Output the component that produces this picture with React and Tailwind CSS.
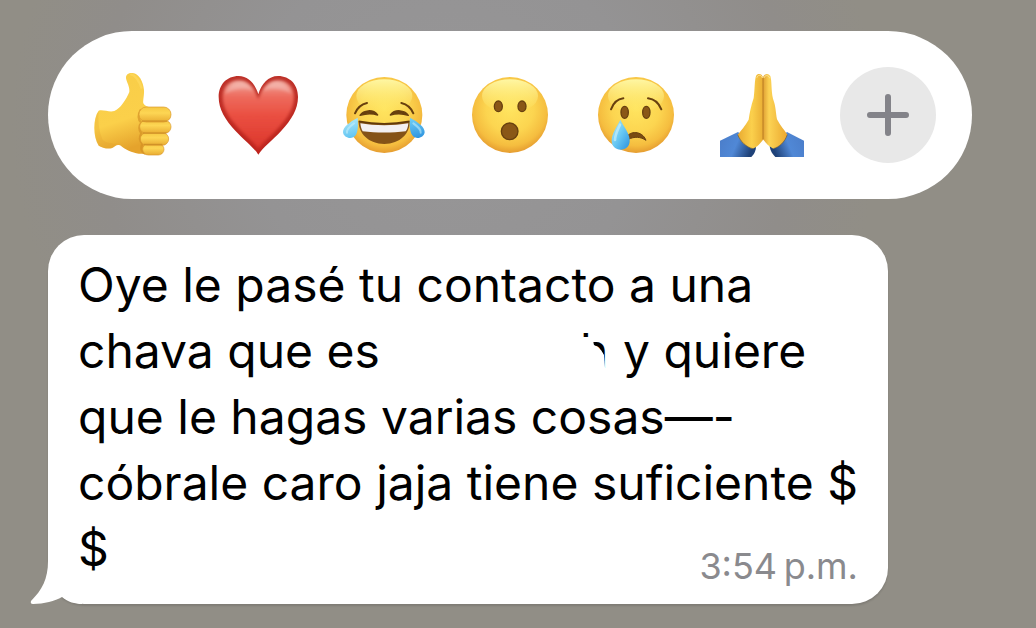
import React from "react";

function FaceGradient({ id }) {
  return (
    <defs>
      <radialGradient id={id} cx="0.5" cy="0.42" r="0.62">
        <stop offset="0" stopColor="#ffe45f" />
        <stop offset="0.5" stopColor="#fcd550" />
        <stop offset="0.78" stopColor="#f5bd3f" />
        <stop offset="1" stopColor="#df8f2a" />
      </radialGradient>
      <linearGradient id={id + "-shine"} x1="0" y1="0" x2="0" y2="1">
        <stop offset="0" stopColor="#fff9a8" stopOpacity="0.95" />
        <stop offset="1" stopColor="#fff27a" stopOpacity="0" />
      </linearGradient>
      <linearGradient id={id + "-tear"} x1="0" y1="0" x2="1" y2="1">
        <stop offset="0" stopColor="#b4ebfa" />
        <stop offset="0.5" stopColor="#68c8f3" />
        <stop offset="1" stopColor="#2a90de" />
      </linearGradient>
    </defs>
  );
}

function Face({ id, cx }) {
  return (
    <>
      <FaceGradient id={id} />
      <circle cx={cx} cy="165" r="114" fill={`url(#${id})`} />
      <ellipse cx={cx} cy="108" rx="84" ry="50" fill={`url(#${id}-shine)`} />
    </>
  );
}

function Thumb() {
  return (
    <svg viewBox="-9 0 330 330" className="size-[110px]" aria-hidden="true">
      <defs>
        <linearGradient id="thumb-skin" x1="0" y1="0" x2="0.25" y2="1">
          <stop offset="0" stopColor="#f8cd48" />
          <stop offset="0.65" stopColor="#fbd04a" />
          <stop offset="1" stopColor="#e5a32c" />
        </linearGradient>
        <linearGradient id="thumb-finger" x1="0" y1="0" x2="0" y2="1">
          <stop offset="0" stopColor="#f6c842" />
          <stop offset="0.4" stopColor="#fdd654" />
          <stop offset="1" stopColor="#e9ac32" />
        </linearGradient>
      </defs>
      <path d="M56 152C70 148 88 158 103 153C121 146 139 118 148 96C150 80 139 65 138 55C137 42 147 38 158 39C177 41 190 65 192 90C193 107 188 122 190 130C193 137 202 140 211 143L230 279C217 285 200 285 187 281C166 282 143 272 126 260C112 250 108 258 97 264C83 269 65 262 56 257C39 231 38 175 56 152Z" fill="url(#thumb-skin)" />
      <path d="M56 153C40 178 40 230 57 257C67 263 86 268 98 262L112 250C98 253 81 249 69 241C57 218 53 181 56 153Z" fill="#dd9729" opacity=".2" />
      <path d="M183 148C173 164 174 180 184 188C175 200 177 210 184 220C177 233 178 242 187 251C181 265 185 276 196 281" fill="none" stroke="#d28f24" strokeWidth="7" opacity=".65" />
      <rect x="188" y="251" width="64" height="34" rx="17" fill="url(#thumb-finger)" stroke="#d9972c" strokeWidth="2" />
      <rect x="181" y="218" width="85" height="38" rx="19" fill="url(#thumb-finger)" stroke="#d9972c" strokeWidth="2" />
      <rect x="179" y="181" width="94" height="39" rx="19" fill="url(#thumb-finger)" stroke="#d9972c" strokeWidth="2" />
      <rect x="177" y="141" width="96" height="45" rx="22" fill="url(#thumb-finger)" stroke="#d9972c" strokeWidth="2" />
      <path d="M188 183H260M190 219H258M193 253H246" stroke="#bd7c20" strokeWidth="3" strokeLinecap="round" opacity=".65" />
      <path d="M153 43C166 45 179 65 184 83" fill="none" stroke="#ffdc63" strokeWidth="7" strokeLinecap="round" opacity=".6" />
    </svg>
  );
}

function Heart() {
  return (
    <svg viewBox="-6 0 330 330" className="size-[110px]" aria-hidden="true">
      <defs>
        <linearGradient id="heart-fill" x1="0" y1="0" x2="0" y2="1">
          <stop offset="0" stopColor="#f0a69a" />
          <stop offset="0.24" stopColor="#ed6a5c" />
          <stop offset="0.5" stopColor="#ea5042" />
          <stop offset="1" stopColor="#dc362b" />
        </linearGradient>
        <linearGradient id="heart-edge" x1="0" y1="0" x2="0" y2="1">
          <stop offset="0" stopColor="#bd3028" />
          <stop offset="1" stopColor="#bf241d" />
        </linearGradient>
        <filter id="heart-soft" x="-10%" y="-10%" width="120%" height="120%">
          <feGaussianBlur stdDeviation="4" />
        </filter>
      </defs>
      <path d="M160 103C151 72 130 48 101 48C65 48 41 74 41 111C41 148 61 180 91 212C119 242 148 264 160 284C172 264 201 242 229 212C259 180 279 148 279 111C279 74 255 48 219 48C190 48 169 72 160 103Z" fill="url(#heart-edge)" />
      <path d="M160 118C148 81 129 61 102 61C73 61 53 81 53 112C53 145 71 173 99 203C124 230 148 248 160 266C172 248 196 230 221 203C249 173 267 145 267 112C267 81 247 61 218 61C191 61 172 81 160 118Z" fill="url(#heart-fill)" filter="url(#heart-soft)" />
      <path d="M62 101C69 66 121 50 146 93C119 83 88 86 62 101ZM174 93C199 50 251 66 258 101C232 86 201 83 174 93Z" fill="#fff" opacity=".25" filter="url(#heart-soft)" />
    </svg>
  );
}

function Joy() {
  return (
    <svg viewBox="-3 0 330 330" className="size-[110px]" aria-hidden="true">
      <Face id="joy" cx="163" />
      <path d="M75 160C82 143 94 133 111 129M214 129C231 133 243 143 250 160" fill="none" stroke="#69400e" strokeWidth="6" strokeLinecap="round" />
      <path d="M90 166C101 149 130 147 143 165C128 160 109 160 90 166ZM181 165C194 147 224 149 235 166C218 160 198 160 181 165Z" fill="#68400e" stroke="#68400e" strokeWidth="4" strokeLinejoin="round" />
      <path d="M86 184C132 193 192 193 239 184C241 220 210 252 163 252C116 252 85 220 86 184Z" fill="#855317" />
      <path d="M91 190C132 198 193 198 235 190C234 202 231 210 227 214C187 219 139 219 98 214C94 207 92 199 91 190Z" fill="#f3f0f1" />
      <path d="M86 184C132 193 192 193 239 184" fill="none" stroke="#623908" strokeWidth="5" />
      <path d="M83 173C59 186 38 201 39 217C41 234 66 241 77 226C86 211 84 190 83 173ZM240 173C264 186 285 201 284 217C282 234 257 241 247 226C237 211 239 190 240 173Z" fill="url(#joy-tear)" />
      <path d="M72 190C58 200 49 209 51 218M250 190C266 202 274 209 272 218" fill="none" stroke="#c9f1fb" strokeWidth="6" strokeLinecap="round" opacity=".55" />
    </svg>
  );
}

function Surprised() {
  return (
    <svg viewBox="0 0 330 330" className="size-[110px]" aria-hidden="true">
      <Face id="wow" cx="165" />
      <g fill="#8a5717" stroke="#68400f" strokeWidth="4">
        <ellipse cx="130" cy="139" rx="12" ry="16" />
        <ellipse cx="201" cy="139" rx="12" ry="16" />
        <circle cx="164" cy="214" r="25" />
      </g>
    </svg>
  );
}

function Crying() {
  return (
    <svg viewBox="-3 0 330 330" className="size-[110px]" aria-hidden="true">
      <Face id="cry" cx="162" />
      <path d="M87 148C94 129 107 117 124 115M198 115C216 117 231 131 238 148" fill="none" stroke="#68400f" strokeWidth="6" strokeLinecap="round" />
      <g fill="#8a5717" stroke="#68400f" strokeWidth="4">
        <ellipse cx="128" cy="157" rx="11" ry="18" />
        <ellipse cx="193" cy="157" rx="11" ry="18" />
      </g>
      <path d="M134 232C142 213 180 210 192 241C176 230 157 229 139 238Z" fill="#7a4b12" stroke="#68400f" strokeWidth="3" strokeLinejoin="round" />
      <path d="M115 179C104 202 89 220 89 242C89 258 101 269 116 269C132 269 143 258 143 242C143 220 127 203 115 179Z" fill="url(#cry-tear)" />
      <path d="M114 194C106 212 99 225 99 240" fill="none" stroke="#d1f3fb" strokeWidth="8" strokeLinecap="round" opacity=".6" />
    </svg>
  );
}

function Praying() {
  return (
    <svg viewBox="6 0 330 330" className="size-[110px]" aria-hidden="true">
      <defs>
        <linearGradient id="pray-left" x1="0" y1="0" x2="1" y2="0">
          <stop offset="0" stopColor="#e9aa31" />
          <stop offset="0.55" stopColor="#fbd04c" />
          <stop offset="1" stopColor="#eaae34" />
        </linearGradient>
        <linearGradient id="pray-right" x1="0" y1="0" x2="1" y2="0">
          <stop offset="0" stopColor="#e0a033" />
          <stop offset="0.25" stopColor="#fcd354" />
          <stop offset="1" stopColor="#eaa72f" />
        </linearGradient>
        <linearGradient id="pray-sleeve-left" x1="0" y1="0" x2="1" y2="0.3">
          <stop offset="0" stopColor="#4a7cc8" />
          <stop offset="0.55" stopColor="#5088d6" />
          <stop offset="1" stopColor="#1f4279" />
        </linearGradient>
        <linearGradient id="pray-sleeve-right" x1="1" y1="0" x2="0" y2="0.3">
          <stop offset="0" stopColor="#4a7cc8" />
          <stop offset="0.55" stopColor="#5088d6" />
          <stop offset="1" stopColor="#1f4279" />
        </linearGradient>
      </defs>
      <path d="M45 242L99 216L153 259C153 274 146 285 139 291H45Z" fill="url(#pray-sleeve-left)" />
      <path d="M297 242L246 216L194 259C196 274 204 285 211 291H297Z" fill="url(#pray-sleeve-right)" />
      <path d="M174 52C171 41 160 39 154 46C148 59 150 88 146 114C138 137 134 159 131 179C121 197 108 211 98 224C105 244 123 261 143 266C155 263 168 249 175 238Z" fill="url(#pray-left)" />
      <path d="M174 52C179 40 190 39 196 48C201 64 198 91 204 116C213 140 212 157 216 178C225 197 238 209 247 224C239 247 223 261 205 266C194 262 183 250 174 238Z" fill="url(#pray-right)" />
      <path d="M174 53V238" stroke="#b87b22" strokeWidth="3" />
      <path d="M156 52C158 44 169 43 172 53M177 53C180 44 190 44 194 54" fill="none" stroke="#ffe495" strokeWidth="3" strokeLinecap="round" />
      <path d="M98 224C106 244 124 262 144 266M247 224C239 247 223 261 205 266" fill="none" stroke="#5e5541" strokeWidth="3" opacity=".65" />
    </svg>
  );
}

const reactions = [
  { label: "Me gusta", Icon: Thumb },
  { label: "Corazón", Icon: Heart },
  { label: "Risa", Icon: Joy },
  { label: "Sorpresa", Icon: Surprised },
  { label: "Tristeza", Icon: Crying },
  { label: "Gracias", Icon: Praying },
];

export default function App() {
  return (
    <main className="flex min-h-screen flex-col gap-9 bg-[#918e86] bg-[radial-gradient(ellipse_42%_62%_at_43%_20%,#979697_0%,#949394_45%,#908d8a_80%,#918e86_100%)] px-12 pt-[31px] pb-6 font-['Inter',sans-serif]">
      <div className="grid w-full max-w-[924px] grid-cols-7 place-items-center rounded-full bg-white px-[21px] py-[29px]">
        {reactions.map(({ label, Icon }) => (
          <button key={label} type="button" aria-label={label}>
            <Icon />
          </button>
        ))}
        <button type="button" aria-label="Más reacciones" className="grid size-24 place-items-center rounded-full bg-[#e8e8e8]">
          <svg viewBox="0 0 44 44" className="size-11" fill="none" stroke="#838389" strokeWidth="6" strokeLinecap="round" aria-hidden="true">
            <path d="M22 4V40M4 22H40" />
          </svg>
        </button>
      </div>

      <article className="relative w-full max-w-[840px] rounded-[36px] bg-white px-[30px] pt-[17px] pb-3 shadow-[0_2px_2px_rgba(0,0,0,0.12)]">
        <svg viewBox="0 0 52 44" className="absolute -bottom-px -left-[18px] h-11 w-[52px]" fill="#fff" aria-hidden="true">
          <path d="M18 0C18 18 12 29 1 40Q0 43 3 43C14 43 25 40 32 36C38 41 45 43 52 43V0Z" />
        </svg>
        <div className="relative text-[48px] leading-[66px] whitespace-nowrap text-black">
          <p>Oye le pasé tu contacto a una</p>
          <p className="flex">
            <span className="w-[502px]">chava que es</span>
            <span className="w-[43px] [clip-path:polygon(0_0,30px_0,30px_50px,25px_50px,24px_37px,21px_32px,14px_27px,12px_19px,0_19px)]">h</span>
            <span>y quiere</span>
          </p>
          <p>que le hagas varias cosas—-</p>
          <p>cóbrale caro jaja tiene suficiente $</p>
          <div className="flex h-[76px] items-end justify-between">
            <p className="self-start">$</p>
            <time className="text-[36px] leading-[52px] text-[#8a8a8e]">3:54{"\u2009"}p.m.</time>
          </div>
        </div>
      </article>
    </main>
  );
}
